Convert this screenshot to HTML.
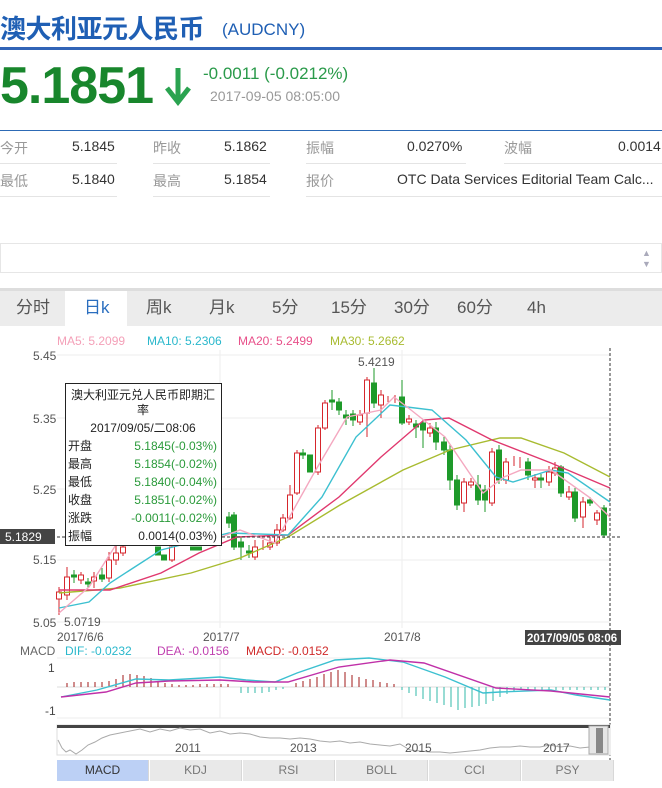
<!DOCTYPE html>
<html><head><meta charset="utf-8">
<style>
*{margin:0;padding:0;box-sizing:border-box}
body{width:662px;height:788px;overflow:hidden;background:#fff;font-family:"Liberation Sans","Noto Sans CJK SC",sans-serif;position:relative;color:#333}
.a{position:absolute;white-space:nowrap}
.lab{color:#999;font-size:14px}
.val{color:#333;font-size:14px}
.tab{position:absolute;top:296px;height:24px;line-height:24px;font-size:17px;color:#555}
.btn{position:absolute;top:760px;height:21px;width:92px;background:#e9e9e9;border-right:1px solid #d8d8d8;font-size:12px;color:#777;text-align:center;line-height:21px}
</style></head><body>
<div class="a" style="left:0;top:9px;font-size:26px;font-weight:bold;color:#1f5fb4;letter-spacing:-0.5px">澳大利亚元人民币</div>
<div class="a" style="left:222px;top:20px;font-size:17px;color:#1f5fb4">(AUDCNY)</div>
<div class="a" style="left:0;top:47px;width:662px;height:3px;background:#3164b7"></div>
<div class="a" style="left:0;top:56px;font-size:52px;font-weight:bold;color:#18862c;letter-spacing:-1px">5.1851</div>
<svg class="a" style="left:164px;top:66px" width="28" height="40"><path d="M14 2V32" stroke="#2aa350" stroke-width="5"/><path d="M3 22L14 36L25 22" stroke="#2aa350" stroke-width="5" fill="none"/></svg>
<div class="a" style="left:203px;top:64px;font-size:17px;color:#2a9a4a">-0.0011 (-0.0212%)</div>
<div class="a" style="left:210px;top:88px;font-size:14px;color:#999">2017-09-05 08:05:00</div>
<div class="a" style="left:0;top:130px;width:662px;height:1px;background:#2d6ab5"></div>
<div class="a lab" style="left:0;top:138px">今开</div><div class="a val" style="left:72px;top:138px">5.1845</div>
<div class="a lab" style="left:153px;top:138px">昨收</div><div class="a val" style="left:224px;top:138px">5.1862</div>
<div class="a lab" style="left:306px;top:138px">振幅</div><div class="a val" style="left:407px;top:138px">0.0270%</div>
<div class="a lab" style="left:504px;top:138px">波幅</div><div class="a val" style="left:618px;top:138px">0.0014</div>
<div class="a lab" style="left:0;top:171px">最低</div><div class="a val" style="left:72px;top:171px">5.1840</div>
<div class="a lab" style="left:153px;top:171px">最高</div><div class="a val" style="left:224px;top:171px">5.1854</div>
<div class="a lab" style="left:306px;top:171px">报价</div><div class="a val" style="left:397px;top:171px">OTC Data Services Editorial Team Calc...</div>
<div class="a" style="left:0;top:163px;width:117px;height:1px;background:#e4e4e4"></div>
<div class="a" style="left:153px;top:163px;width:117px;height:1px;background:#e4e4e4"></div>
<div class="a" style="left:306px;top:163px;width:160px;height:1px;background:#e4e4e4"></div>
<div class="a" style="left:504px;top:163px;width:158px;height:1px;background:#e4e4e4"></div>
<div class="a" style="left:0;top:196px;width:117px;height:1px;background:#e4e4e4"></div>
<div class="a" style="left:153px;top:196px;width:117px;height:1px;background:#e4e4e4"></div>
<div class="a" style="left:306px;top:196px;width:356px;height:1px;background:#e4e4e4"></div>
<div class="a" style="left:0;top:243px;width:662px;height:30px;border:1px solid #e6e6e6"></div>
<div class="a" style="left:642px;top:248px;font-size:9px;color:#aab">▲</div>
<div class="a" style="left:642px;top:259px;font-size:9px;color:#aab">▼</div>
<div class="a" style="left:0;top:288px;width:662px;height:38px;background:#ececec;border-top:3px solid #ddd"></div>
<div class="a" style="left:65px;top:291px;width:62px;height:35px;background:#fff"></div>
<div class="tab" style="left:16px">分时</div><div class="tab" style="left:84px;color:#2a6ebf">日k</div>
<div class="tab" style="left:146px">周k</div><div class="tab" style="left:209px">月k</div>
<div class="tab" style="left:272px">5分</div><div class="tab" style="left:331px">15分</div>
<div class="tab" style="left:394px">30分</div><div class="tab" style="left:457px">60分</div><div class="tab" style="left:527px">4h</div>

<svg class="a" style="left:0;top:330px" width="662" height="458" font-family="Liberation Sans" font-size="12">
<g transform="translate(0,-330)">
<text x="57" y="345" fill="#f4a0b8">MA5: 5.2099</text>
<text x="147" y="345" fill="#2ab8cc">MA10: 5.2306</text>
<text x="238" y="345" fill="#e8508a">MA20: 5.2499</text>
<text x="330" y="345" fill="#a8bb30">MA30: 5.2662</text>
<g stroke="#eee"><line x1="57" y1="355" x2="610" y2="355"/><line x1="57" y1="418" x2="610" y2="418"/><line x1="57" y1="489" x2="610" y2="489"/><line x1="57" y1="560" x2="610" y2="560"/><line x1="57" y1="622" x2="610" y2="622"/>
<line x1="220" y1="350" x2="220" y2="628"/><line x1="402" y1="350" x2="402" y2="628"/>
<line x1="57" y1="658" x2="610" y2="658"/><line x1="57" y1="718" x2="610" y2="718"/><line x1="220" y1="658" x2="220" y2="718"/><line x1="402" y1="658" x2="402" y2="718"/></g>
<g fill="#555"><text x="33" y="360">5.45</text><text x="33" y="423">5.35</text><text x="33" y="494">5.25</text><text x="33" y="564">5.15</text><text x="33" y="627">5.05</text>
<text x="358" y="366">5.4219</text><text x="64" y="626">5.0719</text>
<text x="57" y="641">2017/6/6</text><text x="203" y="641">2017/7</text><text x="384" y="641">2017/8</text></g>
<g stroke-width="1">
<g fill="#fff" stroke="#d6262c">
<line x1="59" y1="587" x2="59" y2="615"/><rect x="56.5" y="592" width="5" height="7"/>
<line x1="67" y1="567" x2="67" y2="600"/><rect x="64.5" y="577" width="5" height="18"/>
<line x1="81" y1="572" x2="81" y2="584"/><rect x="78.5" y="575" width="5" height="5"/>
<line x1="94" y1="572" x2="94" y2="588"/><rect x="91.5" y="577" width="5" height="4"/>
<line x1="109" y1="552" x2="109" y2="582"/><rect x="106.5" y="560" width="5" height="18"/>
<line x1="116" y1="545" x2="116" y2="565"/><rect x="113.5" y="553" width="5" height="7"/>
<line x1="123" y1="540" x2="123" y2="556"/><rect x="120.5" y="547" width="5" height="6"/>
<line x1="172" y1="540" x2="172" y2="562"/><rect x="169.5" y="547" width="5" height="13"/>
<line x1="255" y1="540" x2="255" y2="560"/><rect x="252.5" y="547" width="5" height="10"/>
<line x1="263" y1="540" x2="263" y2="550"/><line x1="270" y1="537" x2="270" y2="550"/><rect x="267.5" y="543" width="5" height="4"/>
<line x1="277" y1="524" x2="277" y2="546"/><rect x="274.5" y="530" width="5" height="13"/>
<line x1="283" y1="514" x2="283" y2="532"/><rect x="280.5" y="518" width="5" height="12"/>
<line x1="290" y1="485" x2="290" y2="520"/><rect x="287.5" y="495" width="5" height="23"/>
<line x1="297" y1="450" x2="297" y2="495"/><rect x="294.5" y="453" width="5" height="40"/>
<line x1="318" y1="425" x2="318" y2="475"/><rect x="315.5" y="428" width="5" height="44"/>
<line x1="325" y1="400" x2="325" y2="430"/><rect x="322.5" y="403" width="5" height="25"/>
<line x1="360" y1="410" x2="360" y2="425"/><rect x="357.5" y="415" width="5" height="7"/>
<line x1="367" y1="377" x2="367" y2="437"/><rect x="364.5" y="380" width="5" height="33"/>
<line x1="381" y1="390" x2="381" y2="418"/><rect x="378.5" y="395" width="5" height="10"/>
<line x1="388" y1="396" x2="388" y2="402"/><line x1="395" y1="395" x2="395" y2="403"/>
<line x1="409" y1="415" x2="409" y2="425"/><rect x="406.5" y="419" width="5" height="3"/>
<line x1="430" y1="423" x2="430" y2="437"/><rect x="427.5" y="428" width="5" height="5"/>
<line x1="464" y1="478" x2="464" y2="512"/><rect x="461.5" y="482" width="5" height="21"/>
<line x1="471" y1="478" x2="471" y2="488"/><rect x="468.5" y="482" width="5" height="3"/>
<line x1="492" y1="448" x2="492" y2="506"/><rect x="489.5" y="452" width="5" height="51"/>
<line x1="506" y1="458" x2="506" y2="484"/><rect x="503.5" y="462" width="5" height="18"/>
<line x1="514" y1="456" x2="514" y2="466"/><line x1="520" y1="457" x2="520" y2="468"/>
<line x1="535" y1="474" x2="535" y2="488"/><rect x="532.5" y="478" width="5" height="2"/>
<line x1="549" y1="466" x2="549" y2="486"/><rect x="546.5" y="472" width="5" height="10"/>
<line x1="555" y1="462" x2="555" y2="476"/><rect x="552.5" y="468" width="5" height="5"/>
<line x1="569" y1="486" x2="569" y2="500"/><rect x="566.5" y="492" width="5" height="5"/>
<line x1="583" y1="497" x2="583" y2="528"/><rect x="580.5" y="502" width="5" height="15"/>
<line x1="597" y1="510" x2="597" y2="525"/><rect x="594.5" y="513" width="5" height="7"/>
</g>
<g fill="#1e9a2a" stroke="#1e9a2a">
<line x1="74" y1="570" x2="74" y2="583"/><rect x="71.5" y="575" width="5" height="2"/>
<line x1="88" y1="578" x2="88" y2="588"/><rect x="85.5" y="582" width="5" height="2"/>
<line x1="102" y1="568" x2="102" y2="582"/><rect x="99.5" y="575" width="5" height="4"/>
<rect x="155.5" y="547" width="5" height="8"/><rect x="161.5" y="555" width="5" height="5"/>
<rect x="190.5" y="547" width="5" height="3"/><rect x="196.5" y="547" width="5" height="3"/>
<line x1="229" y1="512" x2="229" y2="528"/><rect x="226.5" y="517" width="5" height="6"/>
<line x1="234" y1="512" x2="234" y2="550"/><rect x="231.5" y="515" width="5" height="32"/>
<line x1="241" y1="537" x2="241" y2="560"/><rect x="238.5" y="542" width="5" height="5"/>
<line x1="249" y1="545" x2="249" y2="558"/><rect x="246.5" y="551" width="5" height="2"/>
<line x1="303" y1="449" x2="303" y2="459"/><rect x="300.5" y="453" width="5" height="2"/>
<rect x="307.5" y="455" width="5" height="17"/>
<line x1="332" y1="390" x2="332" y2="410"/><rect x="329.5" y="400" width="5" height="2"/>
<line x1="339" y1="398" x2="339" y2="415"/><rect x="336.5" y="402" width="5" height="8"/>
<line x1="346" y1="410" x2="346" y2="425"/><rect x="343.5" y="415" width="5" height="3"/>
<line x1="353" y1="410" x2="353" y2="426"/><rect x="350.5" y="414" width="5" height="6"/>
<line x1="374" y1="368" x2="374" y2="408"/><rect x="371.5" y="383" width="5" height="20"/>
<line x1="402" y1="380" x2="402" y2="425"/><rect x="399.5" y="397" width="5" height="26"/>
<line x1="416" y1="420" x2="416" y2="438"/><rect x="413.5" y="424" width="5" height="3"/>
<line x1="423" y1="420" x2="423" y2="448"/><rect x="420.5" y="423" width="5" height="7"/>
<line x1="436" y1="422" x2="436" y2="450"/><rect x="433.5" y="428" width="5" height="14"/>
<line x1="444" y1="437" x2="444" y2="455"/><rect x="441.5" y="442" width="5" height="8"/>
<line x1="450" y1="445" x2="450" y2="490"/><rect x="447.5" y="450" width="5" height="30"/>
<line x1="457" y1="475" x2="457" y2="510"/><rect x="454.5" y="480" width="5" height="25"/>
<line x1="478" y1="475" x2="478" y2="505"/><rect x="475.5" y="485" width="5" height="15"/>
<line x1="485" y1="485" x2="485" y2="512"/><rect x="482.5" y="490" width="5" height="10"/>
<line x1="499" y1="445" x2="499" y2="484"/><rect x="496.5" y="450" width="5" height="30"/>
<line x1="528" y1="458" x2="528" y2="480"/><rect x="525.5" y="462" width="5" height="13"/>
<line x1="541" y1="474" x2="541" y2="488"/><rect x="538.5" y="478" width="5" height="2"/>
<line x1="561" y1="465" x2="561" y2="497"/><rect x="558.5" y="467" width="5" height="26"/>
<line x1="575" y1="488" x2="575" y2="522"/><rect x="572.5" y="492" width="5" height="26"/>
<line x1="590" y1="497" x2="590" y2="506"/><rect x="587.5" y="500" width="5" height="3"/>
<line x1="604" y1="505" x2="604" y2="538"/><rect x="601.5" y="508" width="5" height="27"/>
</g></g>
<g fill="none" stroke-width="1.4">
<polyline stroke="#a8bb30" points="59,593 120,588 191,573 240,558 288,537 340,505 403,470 450,450 500,438 521,438 564,453 610,477"/>
<polyline stroke="#e0386e" points="59,590 110,590 161,573 199,553 237,537 288,535 339,497 381,457 424,420 449,418 492,440 551,463 610,488"/>
<polyline stroke="#3cc0d0" points="59,608 89,602 110,583 161,550 229,533 288,535 322,497 356,437 390,405 407,407 432,410 466,440 496,477 513,482 551,470 568,473 610,502"/>
<polyline stroke="#f4a8c0" points="59,613 89,587 119,540 160,535 200,545 240,530 275,543 314,473 347,417 381,410 394,397 411,410 445,437 483,493 504,477 521,470 551,470 589,497 610,517"/>
</g>
<line x1="57" y1="537" x2="622" y2="537" stroke="#333" stroke-dasharray="3,2"/>
<line x1="610" y1="348" x2="610" y2="765" stroke="#333" stroke-dasharray="3,2"/>
<rect x="0" y="529" width="55" height="15" fill="#444"/><text x="5" y="541" fill="#fff">5.1829</text>
<rect x="525" y="630" width="96" height="15" fill="#444"/><text x="527" y="642" fill="#fff" font-weight="bold" font-size="11.5">2017/09/05 08:06</text>
<rect x="65.5" y="383.5" width="156" height="162" fill="#fff" stroke="#222"/>
<g font-family="Liberation Sans,Noto Sans CJK SC" font-size="12">
<text x="143" y="399" text-anchor="middle" fill="#222">澳大利亚元兑人民币即期汇</text>
<text x="143" y="414" text-anchor="middle" fill="#222">率</text>
<text x="143" y="432" text-anchor="middle" fill="#222">2017/09/05/二08:06</text>
<g fill="#222"><text x="68" y="450">开盘</text><text x="68" y="468">最高</text><text x="68" y="486">最低</text><text x="68" y="504">收盘</text><text x="68" y="522">涨跌</text><text x="68" y="540">振幅</text></g>
<g fill="#2a9a3a" text-anchor="end"><text x="217" y="450">5.1845(-0.03%)</text><text x="217" y="468">5.1854(-0.02%)</text><text x="217" y="486">5.1840(-0.04%)</text><text x="217" y="504">5.1851(-0.02%)</text><text x="217" y="522">-0.0011(-0.02%)</text><text x="217" y="540" fill="#222">0.0014(0.03%)</text></g>
</g>
<text x="20" y="655" fill="#666">MACD</text><text x="65" y="655" fill="#2ab8cc">DIF: -0.0232</text>
<text x="157" y="655" fill="#c040b0">DEA: -0.0156</text><text x="246" y="655" fill="#d02a2a">MACD: -0.0152</text>
<text x="48" y="672" fill="#444">1</text><text x="45" y="715" fill="#444">-1</text>
<line x1="57" y1="687" x2="610" y2="687" stroke="#ddd"/>
<path stroke="#a01818" d="M67 687v-4M74 687v-5M81 687v-5M88 687v-5M95 687v-5M102 687v-5M109 687v-6M116 687v-8M123 687v-12M130 687v-13M137 687v-12M144 687v-11M151 687v-9M158 687v-6M165 687v-4M172 687v-3M179 687v-2M186 687v-2M193 687v-2M200 687v-3M207 687v-3M214 687v-3M221 687v-3M228 687v-3M296 687v-4M303 687v-6M310 687v-8M317 687v-10M324 687v-13M331 687v-15M338 687v-17M345 687v-15M352 687v-12M359 687v-10M366 687v-8M373 687v-7M380 687v-5M387 687v-4M394 687v-3"/>
<path stroke="#30b8a8" d="M241 687v6M248 687v6M255 687v6M262 687v6M269 687v5M276 687v3M283 687v2M402 687v3M409 687v6M416 687v9M423 687v12M430 687v14M437 687v16M444 687v18M451 687v20M458 687v23M465 687v21M472 687v20M479 687v19M486 687v17M493 687v14M500 687v10M507 687v7M514 687v4M521 687v3M528 687v3M535 687v3M542 687v3M549 687v3M556 687v3M563 687v3M570 687v3M577 687v3M584 687v3M591 687v3M598 687v3M605 687v3"/>
<g fill="none" stroke-width="1.4">
<polyline stroke="#3cc0d0" points="61,697 97,690 136,679 169,680 220,677 246,680 275,682 297,673 335,660 369,658 403,662 445,677 483,693 500,692 551,690 576,695 610,700"/>
<polyline stroke="#c030a8" points="61,697 106,692 136,683 169,681 220,680 254,682 288,682 339,667 390,660 424,663 496,688 551,691 610,697"/>
</g>
<rect x="57" y="725" width="553" height="30" fill="#fff" stroke="#ddd"/>
<rect x="57" y="725" width="553" height="3" fill="#444"/>
<polyline fill="none" stroke="#aaa" points="58,740 62,748 66,752 70,750 76,754 82,750 88,745 95,742 102,738 110,735 120,733 130,731 140,729 150,732 160,729 170,731 180,728 190,730 200,729 210,733 220,731 230,734 240,733 250,734 260,737 270,738 280,738 290,739 300,738 310,739 320,741 330,742 340,741 350,743 360,742 370,744 380,745 390,746 400,744 410,750 420,751 430,752 440,752 450,753 460,752 470,751 480,750 490,748 500,747 510,747 520,746 530,747 540,747 550,745 560,747 570,746 580,748 590,747 600,745 608,748"/>
<g fill="#555" font-size="12"><text x="175" y="752">2011</text><text x="290" y="752">2013</text><text x="405" y="752">2015</text><text x="543" y="752">2017</text></g>
<rect x="589" y="726" width="19" height="28" fill="#e6e6e6" stroke="#aaa"/><rect x="596" y="728" width="7" height="25" fill="#888"/>
</g></svg>
<div class="btn" style="left:57px;background:#bcd0f5;color:#333">MACD</div>
<div class="btn" style="left:150px">KDJ</div>
<div class="btn" style="left:243px">RSI</div>
<div class="btn" style="left:336px">BOLL</div>
<div class="btn" style="left:429px">CCI</div>
<div class="btn" style="left:522px">PSY</div>
</body></html>
